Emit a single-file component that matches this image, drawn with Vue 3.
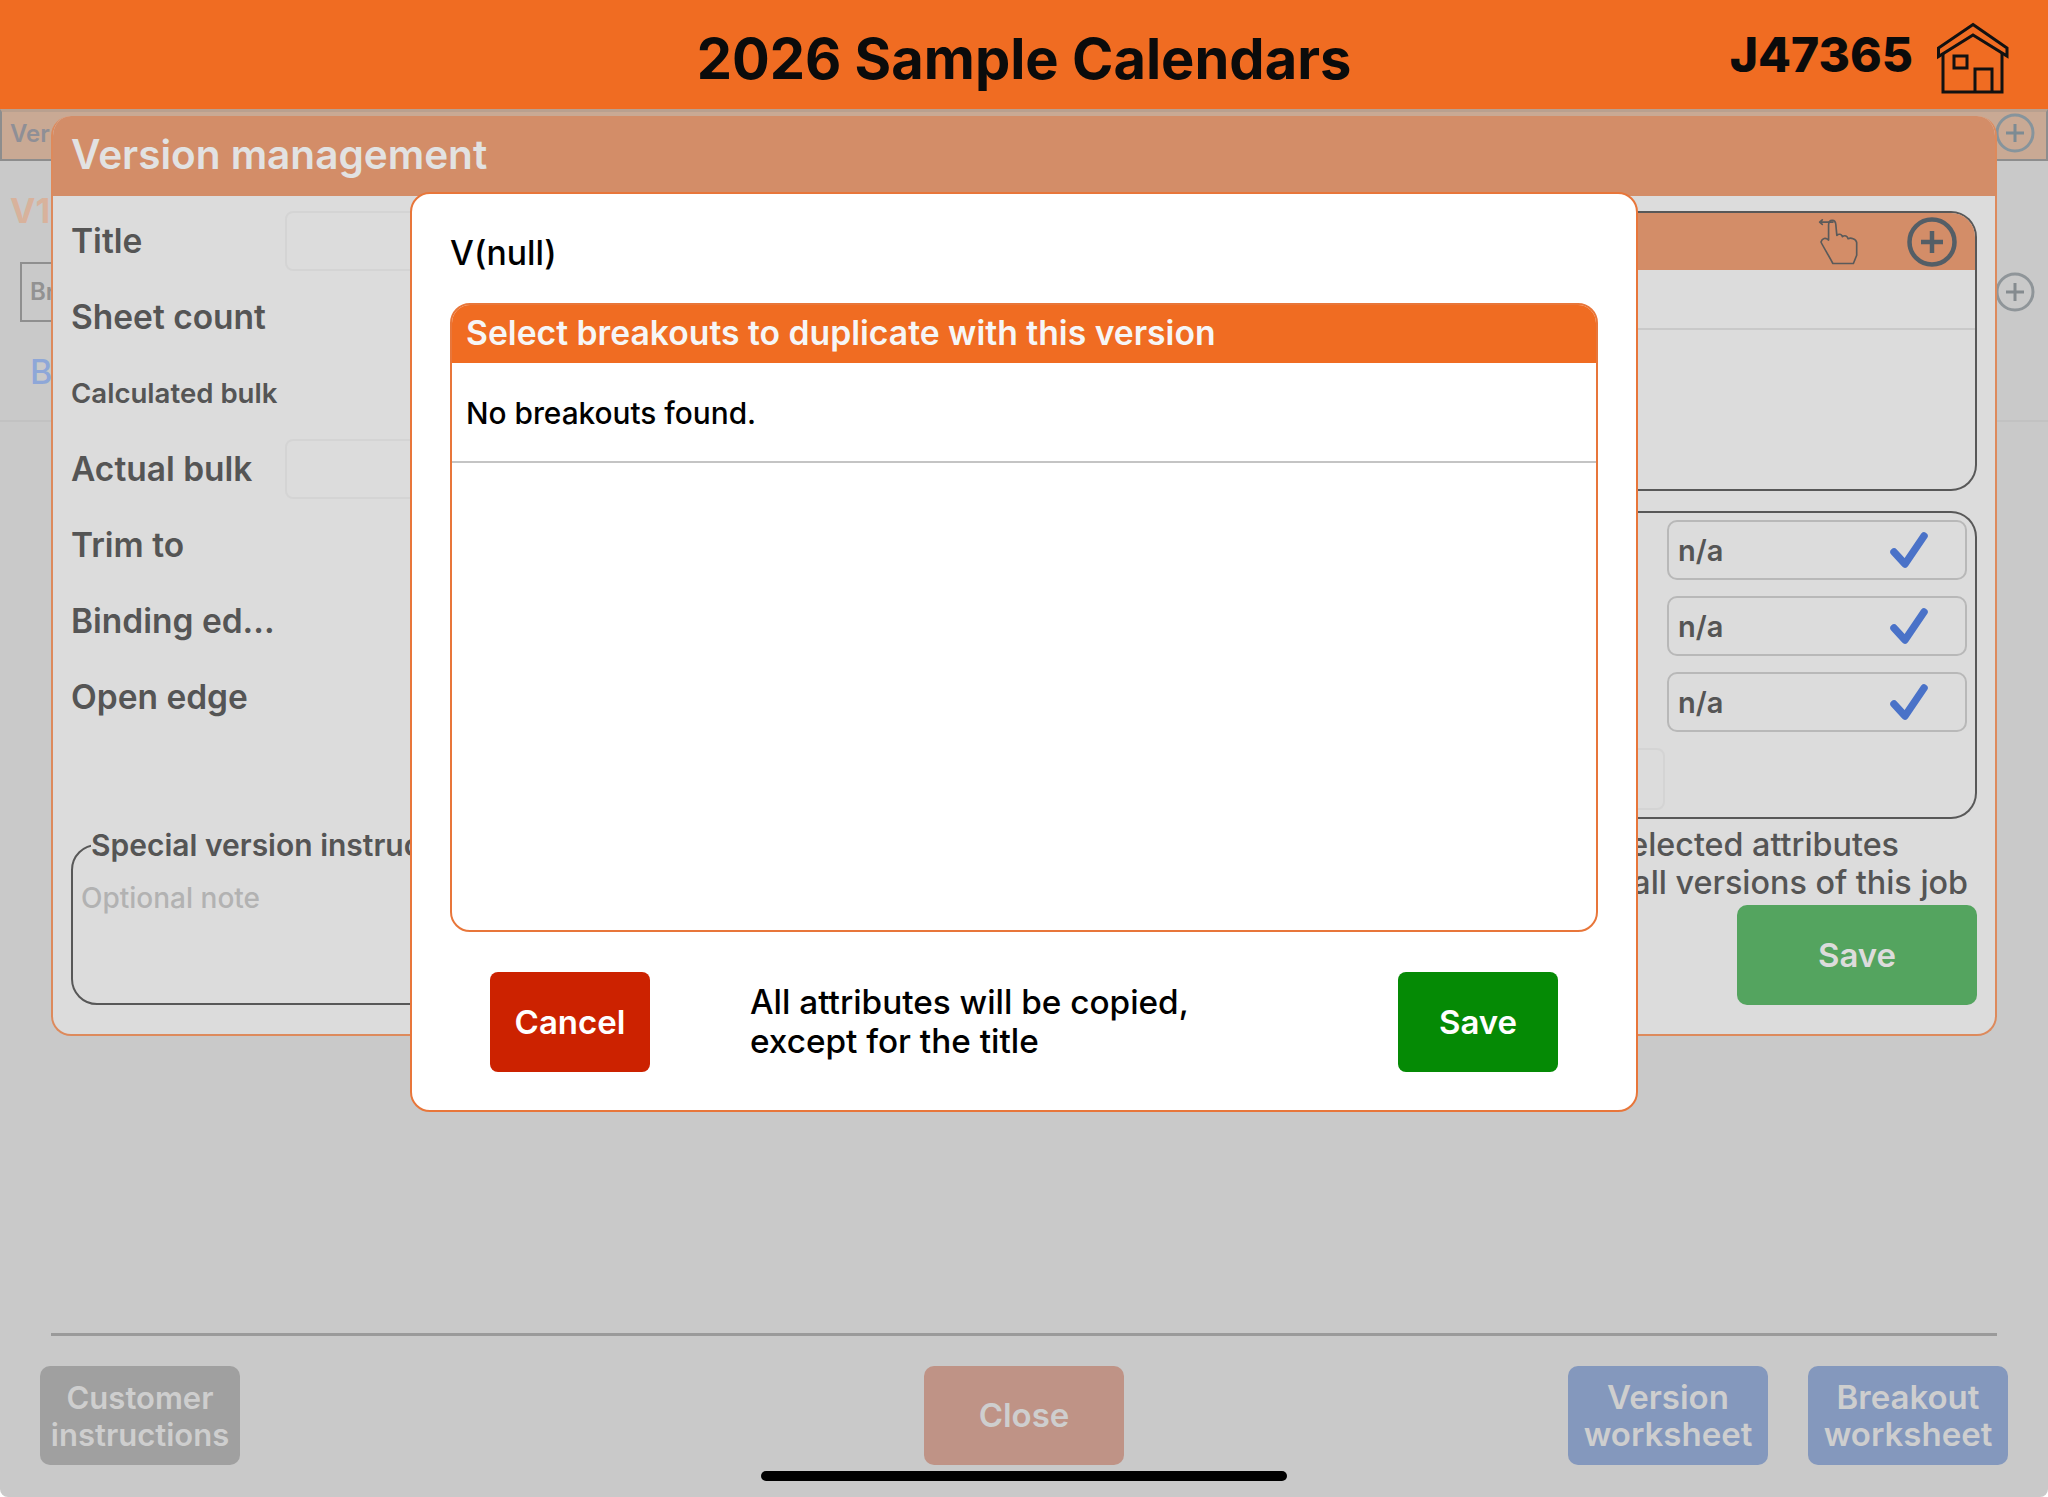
<script setup>
const labels = [
  { text: 'Title', input: true },
  { text: 'Sheet count' },
  { text: 'Calculated bulk', small: true },
  { text: 'Actual bulk', input: true },
  { text: 'Trim to' },
  { text: 'Binding ed...' },
  { text: 'Open edge' }
]
const rows = ['n/a', 'n/a', 'n/a']
</script>

<template>
  <div class="screen">
    <header class="topbar">
      <span></span>
      <h1 class="app-title">2026 Sample Calendars</h1>
      <div class="job">
        <span class="job-no">J47365</span>
        <svg class="house" width="90" height="90" viewBox="0 0 90 90" fill="none" stroke="#111" stroke-width="3" stroke-linejoin="miter">
          <path d="M43 9.5 L77 33 V41 L43 20 L8.5 41.5 V33 Z" />
          <path d="M13 38 V77 H72 V38" />
          <rect x="24" y="41" width="13" height="12" />
          <path d="M45 77 V54 H62 V77" />
        </svg>
      </div>
    </header>

    <div class="page-bar">
      <span class="page-bar-text">Ver</span>
      <svg class="bg-plus" width="40" height="40" viewBox="0 0 40 40" fill="none" stroke="#86949c" stroke-width="3">
        <circle cx="20" cy="20" r="18" />
        <path d="M20 11 V29 M11 20 H29" stroke="#7d8b93" />
      </svg>
    </div>
    <div class="page-version">V1</div>
    <div class="page-row">
      <div class="page-box">Br</div>
      <svg class="bg-plus" width="40" height="40" viewBox="0 0 40 40" fill="none" stroke="#8f9599" stroke-width="3">
        <circle cx="20" cy="20" r="18" />
        <path d="M20 11 V29 M11 20 H29" stroke="#858b8f" />
      </svg>
    </div>
    <div class="page-link">B</div>

    <footer class="bottom">
      <div class="bottom-rule"></div>
      <div class="bottom-buttons">
        <div class="left-btns">
          <button class="foot-btn grey">Customer<br />instructions</button>
        </div>
        <button class="foot-btn salmon">Close</button>
        <div class="right-btns">
          <button class="foot-btn blue">Version<br />worksheet</button>
          <button class="foot-btn blue">Breakout<br />worksheet</button>
        </div>
      </div>
    </footer>

    <section class="panel">
      <div class="panel-head">Version management</div>
      <div class="panel-body">
        <div class="panel-left">
          <div v-for="l in labels" :key="l.text" class="field">
            <span class="field-label" :class="{ small: l.small }">{{ l.text }}</span>
            <span v-if="l.input" class="field-input"></span>
          </div>
          <fieldset class="note">
            <legend class="note-legend">Special version instructions</legend>
            <div class="note-placeholder">Optional note</div>
          </fieldset>
        </div>

        <div class="panel-right">
          <div class="card card-top">
            <div class="card-head">
              <svg class="hand" width="43" height="50" viewBox="50 35 130 150" fill="none" stroke="#5a5a5a" stroke-width="5" stroke-linejoin="round" stroke-linecap="round">
                <path d="M58 50 H98 M66 43 L58 50 L66 57" />
                <path d="M98 175 C85 150 72 130 62 110 C66 98 76 96 85 104 V58 C86 40 106 40 107 58 L110 90 C116 84 124 86 127 94 C134 88 142 92 144 100 C152 96 168 100 170 112 V150 L160 175 Z" />
              </svg>
              <svg width="50" height="50" viewBox="0 0 50 50" fill="none" stroke="#545e66" stroke-width="4.5">
                <circle cx="25" cy="25" r="22.5" />
                <path d="M25 14 V36 M14 25 H36" />
              </svg>
            </div>
            <div class="card-line"></div>
          </div>

          <div class="card card-bottom">
            <div class="card-col-left"><span class="ghost-input"></span></div>
            <div class="card-col-right">
              <div v-for="(r, i) in rows" :key="i" class="na-row">
                <span>{{ r }}</span>
                <svg class="check" width="38" height="36" viewBox="0 0 38 36" fill="none" stroke="#4a72c8" stroke-width="7.5" stroke-linecap="round" stroke-linejoin="round">
                  <path d="M4 20 L15 32 L34 4" />
                </svg>
              </div>
            </div>
          </div>

          <div class="apply">
            <div class="apply-one">Apply selected attributes</div>
            <div class="apply-two">to all versions of this job</div>
          </div>
          <div class="save-line"><button class="panel-save">Save</button></div>
        </div>
      </div>
    </section>

    <section class="modal">
      <div class="modal-title">V(null)</div>
      <div class="modal-box">
        <div class="modal-box-head">Select breakouts to duplicate with this version</div>
        <div class="modal-box-row">No breakouts found.</div>
      </div>
      <div class="modal-foot">
        <button class="modal-btn cancel">Cancel</button>
        <div class="modal-note">All attributes will be copied,<br />except for the title</div>
        <button class="modal-btn save">Save</button>
      </div>
    </section>

    <div class="home-indicator"></div>
  </div>
</template>

<style>
html, body { margin: 0; background: #fff; }
</style>

<style scoped>
.screen {
  position: relative;
  width: 2048px;
  height: 1497px;
  overflow: hidden;
  display: flex;
  flex-direction: column;
  background: #c9c9c9;
  border-radius: 0 0 8px 8px;
  font-family: Inter, "Liberation Sans", sans-serif;
}
button { font-family: inherit; border: none; padding: 0; }

.topbar {
  height: 109px;
  flex: none;
  background: #f06c22;
  display: grid;
  grid-template-columns: 1fr auto 1fr;
  align-items: center;
  box-sizing: border-box;
}
.app-title {
  margin: 0;
  font-size: 56px;
  font-weight: 700;
  color: #0b0b0b;
  position: relative;
  top: 4px;
}
.job { display: flex; align-items: center; justify-content: flex-end; gap: 17px; padding-right: 28px; }
.job-no { font-size: 48px; font-weight: 800; color: #0b0b0b; }
.house { display: block; transform: translateY(5px); }

.page-bar {
  height: 52px;
  flex: none;
  box-sizing: border-box;
  border: 2px solid #8d8d8d;
  border-top: 3px solid #b9a08f;
  background: #c9a994;
  display: flex;
  align-items: center;
  justify-content: space-between;
  padding: 0 11px 5px 8px;
}
.page-bar-text { font-size: 24px; font-weight: 600; color: #8f8f96; }
.page-version { padding: 29px 0 0 10px; height: 70px; box-sizing: border-box; font-size: 34px; font-weight: 700; color: #d8b29c; line-height: 42px; }
.page-row { display: flex; align-items: center; justify-content: space-between; padding: 31px 13px 0 20px; }
.page-box { width: 300px; height: 60px; box-sizing: border-box; border: 2px solid #8f8f8f; font-size: 24px; font-weight: 600; color: #929292; padding: 13px 8px; }
.page-link { padding: 29px 0 0 30px; height: 100px; box-sizing: border-box; font-size: 34px; font-weight: 500; color: #8ea7d8; line-height: 42px; border-bottom: 2px solid #c2c2c2; }

.bottom { margin-top: auto; padding-bottom: 32px; }
.bottom-rule { height: 3px; margin: 0 51px; background: #9a9a9a; }
.bottom-buttons {
  margin-top: 30px;
  padding: 0 40px;
  display: grid;
  grid-template-columns: 1fr auto 1fr;
}
.right-btns { display: flex; justify-content: flex-end; gap: 40px; }
.foot-btn {
  width: 200px;
  height: 99px;
  border-radius: 10px;
  color: #cecece;
  font-size: 33px;
  line-height: 37px;
  font-weight: 600;
}
.foot-btn.grey { background: #a0a0a0; font-size: 31px; }
.foot-btn.salmon { background: #bf9386; }
.foot-btn.blue { background: #8498bd; }

.panel {
  position: absolute;
  left: 51px;
  top: 116px;
  width: 1946px;
  height: 920px;
  box-sizing: border-box;
  border: 2px solid #dd8a5c;
  border-top: none;
  border-radius: 20px;
  background: #dcdcdc;
  overflow: hidden;
  display: flex;
  flex-direction: column;
}
.panel-head {
  height: 80px;
  flex: none;
  background: #d38d68;
  color: #e2e2e2;
  font-size: 40.5px;
  font-weight: 600;
  line-height: 78px;
  padding-left: 18px;
}
.panel-body { flex: 1; display: grid; grid-template-columns: 960px 1fr; padding: 0 18px 0 18px; }
.panel-left { padding-top: 7px; }
.field { height: 76px; display: flex; align-items: center; }
.field-label { width: 214px; flex: none; font-size: 33.5px; font-weight: 600; color: #555; }
.field-label.small { font-size: 27.6px; }
.field-input { width: 500px; height: 60px; box-sizing: border-box; border: 2px solid #d4d4d4; border-radius: 8px; }
.note {
  margin: 92px 0 0;
  padding: 0 8px;
  width: 1000px;
  height: 178px;
  box-sizing: border-box;
  border: 2px solid #585858;
  border-radius: 26px;
  min-width: 0;
}
.note-legend { margin-left: 10px; padding: 0; font-size: 30px; font-weight: 600; color: #555; line-height: 36px; }
.note-placeholder { font-size: 28px; font-weight: 500; color: #b2b2b2; margin-top: 18px; line-height: 34px; }

.panel-right { padding-top: 15px; display: flex; flex-direction: column; }
.card { box-sizing: border-box; border: 2px solid #585858; border-left: none; border-radius: 0 26px 26px 0; }
.card-top { height: 280px; overflow: hidden; }
.card-head {
  height: 57px;
  background: #d38d68;
  display: flex;
  align-items: center;
  justify-content: flex-end;
  gap: 47px;
  padding-right: 18px;
}
.card-line { margin-top: 58px; height: 2px; background: #c9c9c9; }
.card-bottom { height: 308px; margin-top: 20px; display: flex; justify-content: flex-end; gap: 2px; padding: 7px 8px 0 0; }
.card-col-left { flex: 1; padding-top: 228px; }
.ghost-input { display: block; height: 62px; box-sizing: border-box; border: 2px solid #d4d4d4; border-radius: 8px; }
.card-col-right { width: 300px; display: flex; flex-direction: column; gap: 16px; }
.na-row {
  height: 60px;
  box-sizing: border-box;
  border: 2px solid #b8b8b8;
  border-radius: 10px;
  display: flex;
  align-items: center;
  justify-content: space-between;
  padding: 0 37px 0 9px;
  font-size: 29px;
  font-weight: 600;
  color: #555;
}
.apply { margin-top: 7px; font-size: 32.3px; font-weight: 500; color: #555; line-height: 38px; white-space: nowrap; }
.apply-one { text-align: right; padding-right: 78px; }
.apply-two { text-align: right; padding-right: 9px; }
.save-line { margin-top: 3px; display: flex; justify-content: flex-end; }
.panel-save { width: 240px; height: 100px; border-radius: 10px; background: #54a45f; color: #dcdcdc; font-size: 33px; font-weight: 600; }

.modal {
  position: absolute;
  left: 410px;
  top: 192px;
  width: 1228px;
  height: 920px;
  box-sizing: border-box;
  border: 2px solid #e8763a;
  border-radius: 20px;
  background: #fff;
  padding: 0 38px;
  display: flex;
  flex-direction: column;
}
.modal-title { height: 109px; flex: none; box-sizing: border-box; padding-top: 37px; font-size: 33.7px; font-weight: 500; color: #000; line-height: 44px; }
.modal-box { height: 629px; flex: none; box-sizing: border-box; border: 2px solid #e8763a; border-radius: 20px; overflow: hidden; }
.modal-box-head { height: 60px; background: #f06c22; margin: -2px -2px 0; color: #f6f6f6; font-size: 33.7px; font-weight: 600; line-height: 60px; padding-left: 16px; }
.modal-box-row { height: 100px; box-sizing: border-box; border-bottom: 2px solid #c4c4c4; font-size: 29.8px; font-weight: 500; color: #000; padding: 31px 0 0 14px; line-height: 38px; }
.modal-foot { flex: 1; display: flex; align-items: center; padding: 1px 40px 0; }
.modal-btn { width: 160px; height: 100px; border-radius: 8px; color: #fff; font-size: 33px; font-weight: 600; flex: none; }
.modal-btn.cancel { background: #cc2200; }
.modal-btn.save { background: #058a05; }
.modal-note { flex: 1; margin-left: 100px; font-size: 33.3px; font-weight: 500; line-height: 39px; color: #000; }

.home-indicator {
  position: absolute;
  left: 761px;
  top: 1471px;
  width: 526px;
  height: 10px;
  border-radius: 5px;
  background: #000;
}
</style>
